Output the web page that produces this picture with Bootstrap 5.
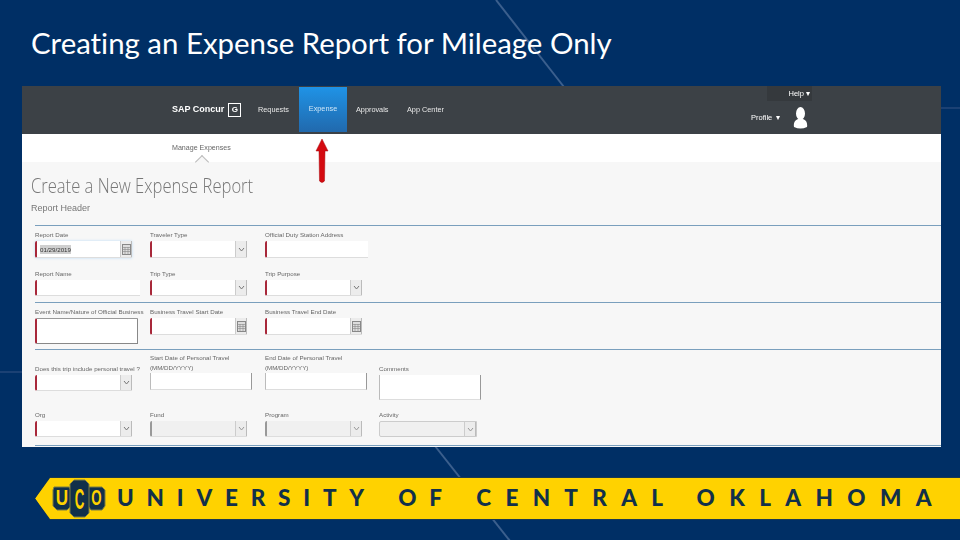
<!DOCTYPE html>
<html lang="en">
<head>
  <meta charset="UTF-8" />
  <title>Creating an Expense Report for Mileage Only</title>
  <link href="https://cdn.jsdelivr.net/npm/bootstrap@5.3.0/dist/css/bootstrap.min.css" rel="stylesheet">
  <style>
    html, body { width: 960px; height: 540px; overflow: hidden; }
    body { background: #002f65; font-family: "Liberation Sans", Arial, sans-serif; }
    .slide { width: 960px; height: 540px; overflow: hidden; position: relative; }
    .slide-lines { position: absolute; left: 0; top: 0; }
    .slide-title { position: relative; height: 86px; padding: 24px 0 0 31px; font: 29.4px/38px Lato, sans-serif; font-variant-ligatures: none; color: #fff; margin: 0; }

    .shot { position: relative; width: 919px; height: 361px; margin-left: 22px; background: #f7f7f7; filter: blur(.3px); }
    .top-nav { height: 48px; background: #3c4146; color: #e8e8e8; font-size: 7.300px; padding-left: 150px; }
    .brand { width: 86px; color: #fff; font-weight: 700; font-size: 9px; white-space: nowrap; }
    .brand-box { width: 13px; height: 14px; margin-left: 4px; border: 1px solid #fff; font-size: 8px; line-height: 12px; text-align: center; }
    .tab-req { width: 41px; }
    .tab-app { width: 51px; }
    .tab-exp { width: 48px; height: 45px; margin: 1px 9px 2px 0; background: linear-gradient(#1f93e6, #2169ad); color: #cfe6f7; }
    .help-tab { position: absolute; left: 745px; top: 0; width: 45px; height: 15px; padding-right: 2px; background: #35393d; color: #fff; font-size: 7.500px; text-align: right; line-height: 16px; }
    .profile { position: absolute; left: 729px; top: 21px; gap: 13px; font-size: 7.500px; color: #fff; }
    .sub-nav { height: 28px; background: #fff; padding-left: 150px; font-size: 7.100px; color: #666; line-height: 28px; position: relative; }
    .sub-caret { position: absolute; left: 175px; top: 23px; width: 10px; height: 10px; border-left: 1px solid #bbb; border-top: 1px solid #bbb; transform: rotate(45deg); background: #f7f7f7; }
    .page-title { font: 300 20.5px/24px "Open Sans", sans-serif; color: #777; margin: 0; padding: 11px 0 0 11px; height: 36px; transform: scaleX(.81); transform-origin: left; white-space: nowrap; }
    .page-sub { font-size: 9px; line-height: 12px; color: #777; padding: 4px 0 0 9px; height: 27px; }

    .form-sec { border-top: 1px solid #7a9fbd; margin-left: 13px; display: grid; grid-template-columns: 115px 115px 114px 110px; }
    .sec-a { height: 77px; grid-template-rows: 32px 38px; align-items: end; }
    .sec-b { height: 47px; padding-top: 4px; align-items: start; }
    .sec-c { height: 97px; padding-top: 3px; grid-template-rows: 47px 29px; row-gap: 10px; align-items: start; border-bottom: 1px solid #7a9fbd; }
    .fld { font-size: 6.200px; color: #666; line-height: 9px; white-space: nowrap; }
    .fld-low { padding-top: 11px; }
    .fld-two { line-height: 10px; }
    .fld-two .fld-box { margin-top: 0; }
    .fld-box { display: flex; height: 17px; margin-top: 2px; background: #fff; border-left: 2px solid #a8283a; border-radius: 2px 0 0 2px; border-bottom: 1px solid #ddd; color: #444; align-items: center; padding-left: 3px; position: relative; }
    .fld-box.short { height: 16px; }
    .fld-box.plain { border-left: 1px solid #bbb; border-right: 1px solid #999; border-radius: 0; }
    .fld-box.off { background: #f0f0f0; border-left-color: #999; }
    .fld-box.off-all { border: 1px solid #ccc; }
    .fld-box.framed { border-top: 1px solid #999; border-right: 1px solid #888; border-bottom: 1px solid #888; }
    .fld-box.glow { box-shadow: 0 0 3px #b9daf5; }
    .w97 { width: 97px; }
    .w98 { width: 98px; }
    .w102 { width: 102px; }
    .w103 { width: 103px; }
    .w105 { width: 105px; }
    .tall { height: 26px; }
    .tall-c { height: 25px; }
    .fld-end { position: absolute; right: 0; top: 0; bottom: 0; width: 12px; background: #ececec; border-left: 1px solid #ccc; border-right: 1px solid #bbb; display: flex; align-items: center; justify-content: center; }
    .fld-end svg { display: block; }
    .date-sel { background: #cfcfcf; color: #333; }
    .red-arrow { position: absolute; left: 293px; top: 52px; }

    .uco-band { position: relative; height: 43px; margin: 30px 0 0 35px; background: #1c3a50; clip-path: polygon(15px 0, 100% 0, 100% 100%, 15px 100%, 0 50%); }
    .uco-fill { height: 41px; background: #ffd200; clip-path: polygon(15px 0, 100% 0, 100% 100%, 15px 100%, 0 50%); position: relative; top: 1px; padding-left: 82px; white-space: nowrap; font: 900 22.5px/39px Lato, sans-serif; letter-spacing: 12.800px; word-spacing: 4px; color: #12304a; }
    .word-mid { letter-spacing: 14.300px; }
    .word-end { letter-spacing: 14.400px; margin-left: -3px; }
    .uco-logo { position: absolute; left: 52px; top: 479px; }
  </style>
</head>
<body>
<div class="slide">
  <svg class="slide-lines" width="960" height="540" viewBox="0 0 960 540">
    <g stroke="#3b5f8d" stroke-width="2" fill="none">
      <path d="M496 0 L564 87" />
      <path d="M435 446 L510 541" />
    </g>
    <g stroke="#24487a" stroke-width="1.500" fill="none">
      <path d="M941 108 H960" />
      <path d="M0 372 H22" />
    </g>
  </svg>
  <h1 class="slide-title">Creating an Expense Report for Mileage Only</h1>

  <div class="shot">
    <div class="top-nav d-flex align-items-center">
      <div class="brand d-flex align-items-center">SAP Concur<span class="brand-box">G</span></div>
      <div class="tab-req">Requests</div>
      <div class="tab-exp d-flex align-items-center justify-content-center">Expense</div>
      <div class="tab-app">Approvals</div>
      <div>App Center</div>
    </div>
    <div class="help-tab">Help &#9662;</div>
    <div class="profile d-flex align-items-center">
      <span>Profile &nbsp;&#9662;</span>
      <svg width="15" height="22" viewBox="0 0 15 22"><ellipse cx="7.500" cy="6.500" rx="4.500" ry="6.500" fill="#fff"/><path d="M1 20 Q0 14 5 12 H10 Q15 14 14 20 Q7.500 23 1 20Z" fill="#fff"/></svg>
    </div>
    <div class="sub-nav">Manage Expenses<span class="sub-caret"></span></div>
    <h2 class="page-title">Create a New Expense Report</h2>
    <div class="page-sub">Report Header</div>

    <div class="form-sec sec-a">
      <div class="fld">Report Date<div class="fld-box w97 glow"><span class="date-sel">01/29/2019</span><span class="fld-end"><svg width="9" height="11"><rect x=".5" y=".5" width="8" height="10" fill="#ddd" stroke="#888"/><path d="M1 3.500H8M1 5.500H8M1 7.500H8M3 3V10M6 3V10" stroke="#888" stroke-width=".6"/></svg></span></div></div>
      <div class="fld">Traveler Type<div class="fld-box w97"><span class="fld-end"><svg width="7" height="5"><path d="M1 1L3.500 4L6 1" stroke="#777" fill="none"/></svg></span></div></div>
      <div class="fld">Official Duty Station Address<div class="fld-box w103"></div></div>
      <div></div>
      <div class="fld">Report Name<div class="fld-box short w105"></div></div>
      <div class="fld">Trip Type<div class="fld-box short w97"><span class="fld-end"><svg width="7" height="5"><path d="M1 1L3.500 4L6 1" stroke="#777" fill="none"/></svg></span></div></div>
      <div class="fld">Trip Purpose<div class="fld-box short w97"><span class="fld-end"><svg width="7" height="5"><path d="M1 1L3.500 4L6 1" stroke="#777" fill="none"/></svg></span></div></div>
    </div>

    <div class="form-sec sec-b">
      <div class="fld">Event Name/Nature of Official Business<div class="fld-box framed tall w103"></div></div>
      <div class="fld">Business Travel Start Date<div class="fld-box w97"><span class="fld-end"><svg width="9" height="11"><rect x=".5" y=".5" width="8" height="10" fill="#ddd" stroke="#888"/><path d="M1 3.500H8M1 5.500H8M1 7.500H8M3 3V10M6 3V10" stroke="#888" stroke-width=".6"/></svg></span></div></div>
      <div class="fld">Business Travel End Date<div class="fld-box w97"><span class="fld-end"><svg width="9" height="11"><rect x=".5" y=".5" width="8" height="10" fill="#ddd" stroke="#888"/><path d="M1 3.500H8M1 5.500H8M1 7.500H8M3 3V10M6 3V10" stroke="#888" stroke-width=".6"/></svg></span></div></div>
    </div>

    <div class="form-sec sec-c">
      <div class="fld fld-low">Does this trip include personal travel ?<div class="fld-box short w97"><span class="fld-end"><svg width="7" height="5"><path d="M1 1L3.500 4L6 1" stroke="#777" fill="none"/></svg></span></div></div>
      <div class="fld fld-two">Start Date of Personal Travel<br>(MM/DD/YYYY)<div class="fld-box plain w102"></div></div>
      <div class="fld fld-two">End Date of Personal Travel<br>(MM/DD/YYYY)<div class="fld-box plain w102"></div></div>
      <div class="fld fld-low">Comments<div class="fld-box plain tall-c w102"></div></div>

      <div class="fld">Org<div class="fld-box short w97"><span class="fld-end"><svg width="7" height="5"><path d="M1 1L3.500 4L6 1" stroke="#777" fill="none"/></svg></span></div></div>
      <div class="fld">Fund<div class="fld-box short off w97"><span class="fld-end"><svg width="7" height="5"><path d="M1 1L3.500 4L6 1" stroke="#999" fill="none"/></svg></span></div></div>
      <div class="fld">Program<div class="fld-box short off w97"><span class="fld-end"><svg width="7" height="5"><path d="M1 1L3.500 4L6 1" stroke="#999" fill="none"/></svg></span></div></div>
      <div class="fld">Activity<div class="fld-box short off off-all w98"><span class="fld-end"><svg width="7" height="5"><path d="M1 1L3.500 4L6 1" stroke="#999" fill="none"/></svg></span></div></div>
    </div>

    <svg class="red-arrow" width="14" height="46" viewBox="0 0 14 46">
      <path d="M7 1 L13 13 H10 L9.500 43 Q7 46 4.500 43 L4 13 H1 Z" fill="#d40a10" stroke="#a60a0e" stroke-width=".5"/>
    </svg>
  </div>

  <div class="uco-band"><div class="uco-fill">UNIVERSITY OF <span class="word-mid">CENTRAL</span> <span class="word-end">OKLAHOMA</span></div></div>
  <svg class="uco-logo" width="54" height="40" viewBox="0 0 54 40" font-family="Liberation Sans, sans-serif" font-weight="700" fill="#ffd200" text-anchor="middle">
    <g fill="#12304a" stroke="#7b7d45" stroke-width="1">
      <path d="M2 8 H17 L19 11 V27 L15 31 H5 L1 27 V11 Z"/>
      <path d="M36 8 H50 L53 11 V27 L50 31 H39 L36 27 Z"/>
      <path d="M22 1 H33 L37 5 V34 L33 38 H22 L18 34 V5 Z"/>
    </g>
    <text transform="translate(10 26) scale(.9 1.150)" font-size="19">U</text>
    <text transform="translate(44.500 26) scale(.7 1.150)" font-size="19">O</text>
    <text transform="translate(27.500 30) scale(.7 1.600)" font-size="19">C</text>
  </svg>
</div>
<script src="https://cdn.jsdelivr.net/npm/bootstrap@5.3.0/dist/js/bootstrap.bundle.min.js"></script>
</body>
</html>
